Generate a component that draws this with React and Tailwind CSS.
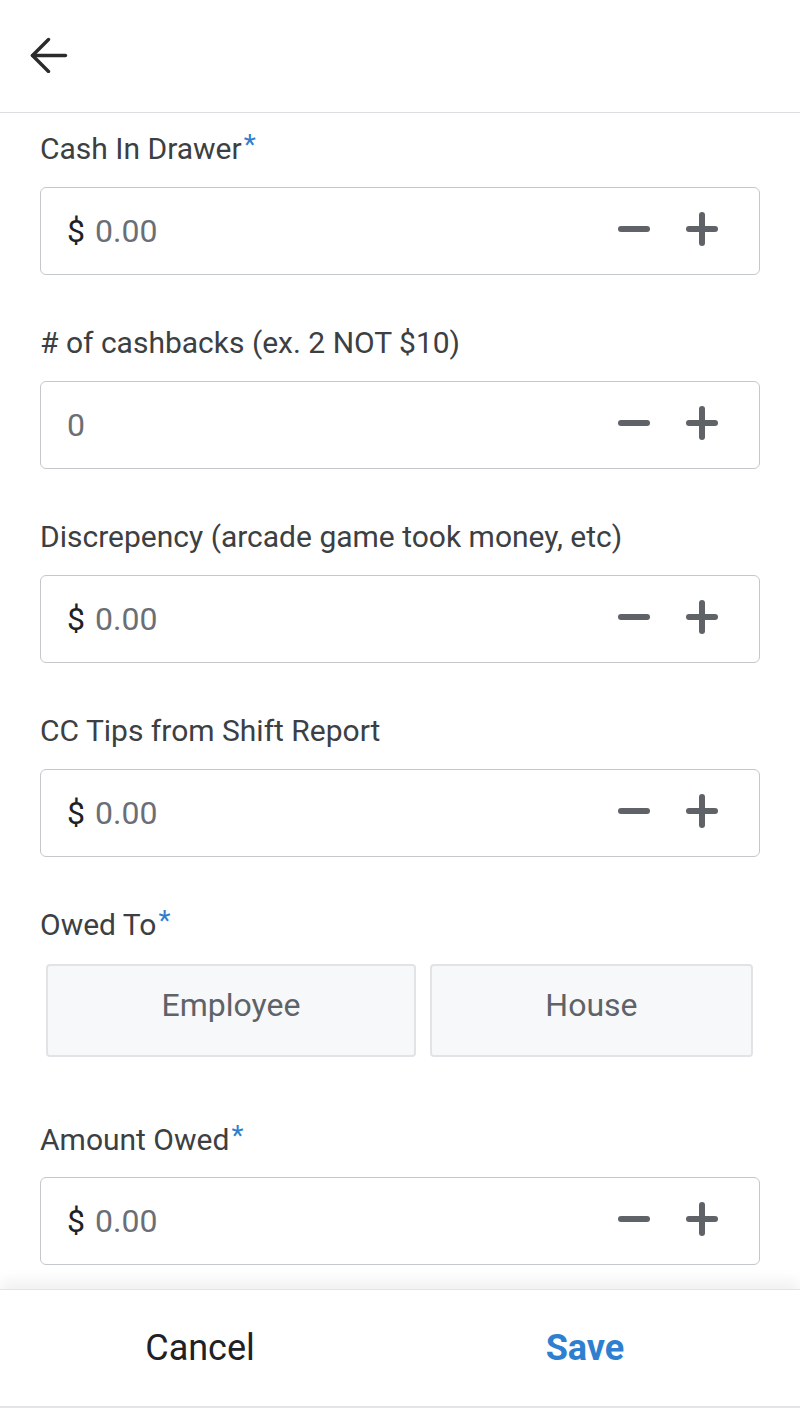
const fields = [
  { label: "Cash In Drawer", required: true, money: true, value: "0.00" },
  { label: "# of cashbacks (ex. 2 NOT $10)", money: false, value: "0" },
  { label: "Discrepency (arcade game took money, etc)", money: true, value: "0.00" },
  { label: "CC Tips from Shift Report", money: true, value: "0.00" },
];

const BackArrow = () => (
  <svg width="38" height="36" viewBox="0 0 38 36" fill="none" stroke="#2b2b2b" strokeWidth="3.4" strokeLinecap="round" strokeLinejoin="round">
    <polyline points="18.5,2.5 2.5,18.5 18.5,34.5" />
    <line x1="2.5" y1="18.5" x2="35.5" y2="18.5" />
  </svg>
);

const Stepper = () => (
  <div className="flex items-center gap-[34px] pb-1">
    <svg width="34" height="34" viewBox="0 0 34 34" fill="none" stroke="#5f6368" strokeWidth="6" strokeLinecap="round">
      <line x1="4" y1="17" x2="30" y2="17" />
    </svg>
    <svg width="34" height="34" viewBox="0 0 34 34" fill="none" stroke="#5f6368" strokeWidth="6" strokeLinecap="round">
      <line x1="4" y1="17" x2="30" y2="17" />
      <line x1="17" y1="3" x2="17" y2="31" />
    </svg>
  </div>
);

const Label = ({ children, required }) => (
  <div className="h-9 text-[30px] leading-9 text-[#3c4043]">
    {children}
    {required && <span className="ml-0.5 align-top text-[28px] leading-7 text-[#2f7fd0]">*</span>}
  </div>
);

const NumberField = ({ money, value }) => (
  <div className="mt-5 flex h-[88px] items-center justify-between rounded-md border border-[#c4c7cc] pl-[26px] pr-[40px]">
    <div className="text-[32px] leading-none">
      {money && <span className="mr-2.5 text-[#202124]">$</span>}
      <span className="text-[#6b6f75]">{value}</span>
    </div>
    <Stepper />
  </div>
);

export default function App() {
  return (
    <div className="flex h-[1408px] flex-col bg-white font-['Roboto',sans-serif]">
      <header className="flex h-[113px] shrink-0 items-center border-b border-[#dcdde1] pl-[30px] pb-[2px]">
        <BackArrow />
      </header>

      <main className="flex-1 px-10 pt-[18px]">
        {fields.map((f, i) => (
          <div key={f.label} className={i === 0 ? "" : "mt-[50px]"}>
            <Label required={f.required}>{f.label}</Label>
            <NumberField money={f.money} value={f.value} />
          </div>
        ))}

        <div className="mt-[50px]">
          <Label required>Owed To</Label>
          <div className="mt-[21px] flex gap-[14px] pl-1.5 pr-[7px]">
            {["Employee", "House"].map((o) => (
              <button
                key={o}
                className="flex h-[93px] flex-auto items-center justify-center rounded border-2 border-[#e1e3e6] bg-[#f7f8fa] pb-3 text-[32px] text-[#5f6368]"
              >
                {o}
              </button>
            ))}
          </div>
        </div>

        <div className="mt-[65px]">
          <Label required>Amount Owed</Label>
          <div className="-mt-px">
            <NumberField money value="0.00" />
          </div>
        </div>
      </main>

      <footer className="flex h-[119px] shrink-0 items-center border-t border-b-2 border-[#e3e4e7] shadow-[0_-8px_14px_rgba(0,0,0,0.06)]">
        <button className="w-1/2 text-[36px] text-[#202124]">Cancel</button>
        <button className="w-1/2 pr-[30px] text-[36px] font-bold text-[#2f7fd0]">Save</button>
      </footer>
    </div>
  );
}
